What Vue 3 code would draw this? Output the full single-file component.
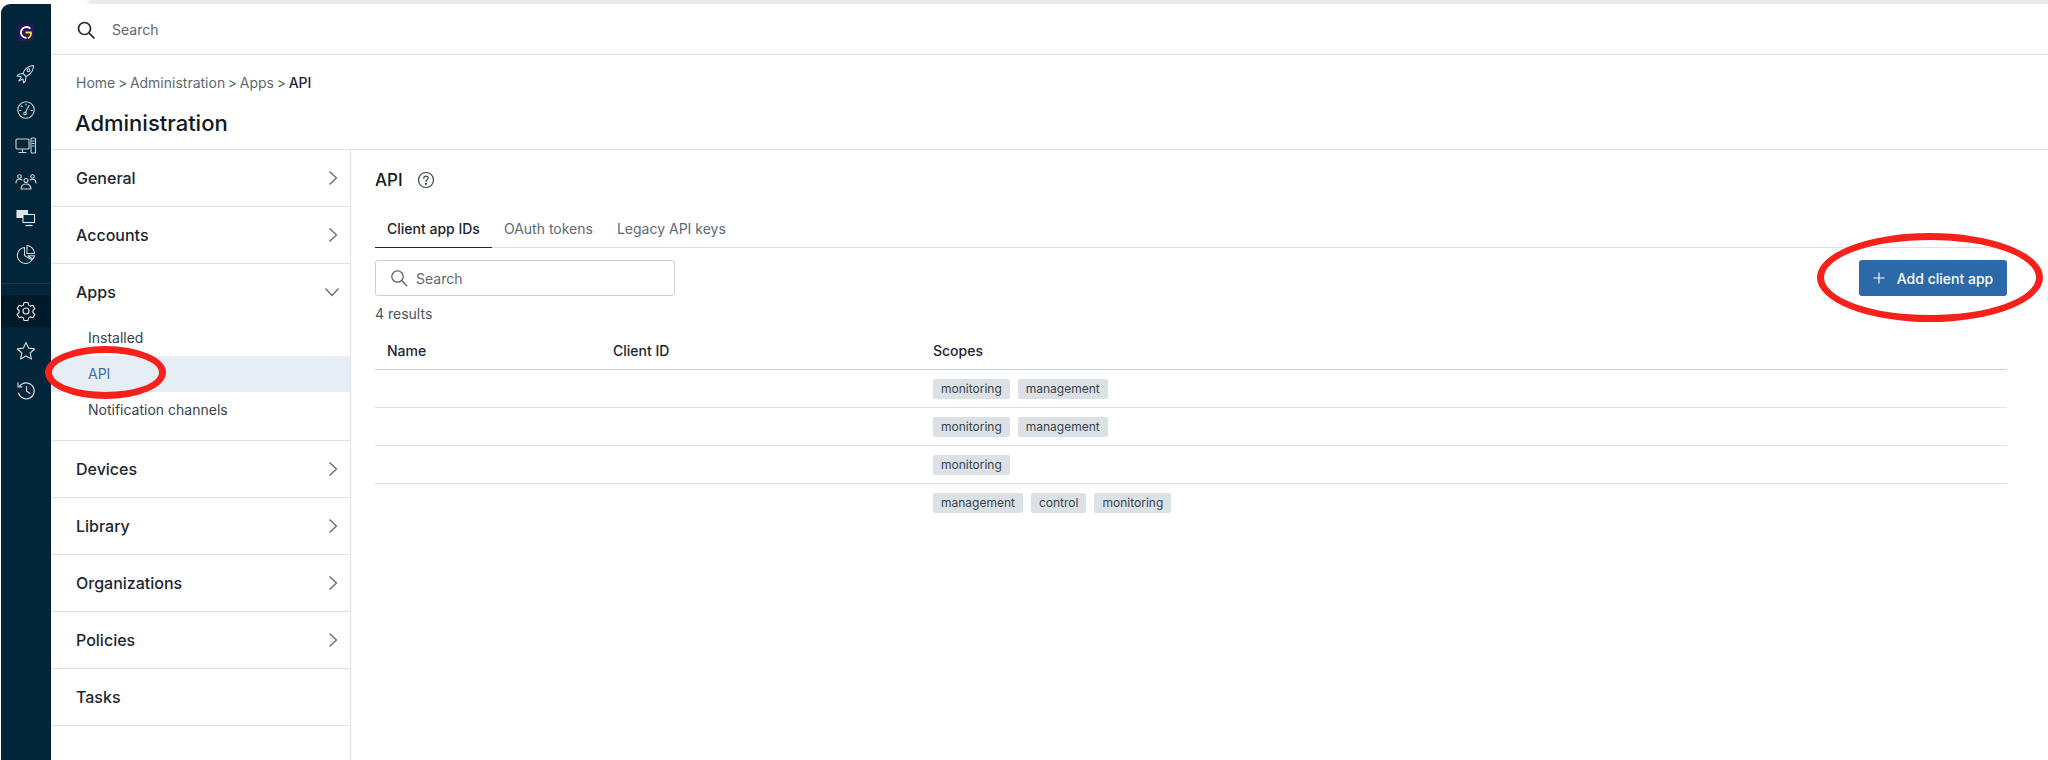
<script setup>
const sections = [
  { name: 'General', chevron: 'right' },
  { name: 'Accounts', chevron: 'right' },
  { name: 'Apps', chevron: 'down', children: ['Installed', 'API', 'Notification channels'] },
  { name: 'Devices', chevron: 'right' },
  { name: 'Library', chevron: 'right' },
  { name: 'Organizations', chevron: 'right' },
  { name: 'Policies', chevron: 'right' },
  { name: 'Tasks' }
]
const rows = [
  ['monitoring', 'management'],
  ['monitoring', 'management'],
  ['monitoring'],
  ['management', 'control', 'monitoring']
]
</script>

<template>
  <div class="page">
    <div class="strip"></div>
    <div class="shell">
      <aside class="rail">
        <div class="rail-logo">
          <svg width="16" height="17" viewBox="0 0 16 17" fill="none"><rect width="16" height="17" fill="#27175c"/><path d="M12.400 4.700A5.500 5.500 0 1 0 8.500 14" stroke="#fff" stroke-width="1.800"/><path d="M7.500 8.500h5.500c.4 2.500-1 4.600-3.200 5.800" stroke="#f3e03b" stroke-width="1.800"/></svg>
        </div>
        <div class="rail-icon r1">
          <svg width="22" height="22" viewBox="0 0 22 22" fill="none" stroke="#ccd5db" stroke-width="1.100" stroke-linejoin="round" stroke-linecap="round"><path d="M8 10.500c1.500-4.500 5-7.500 10.500-8 0 5.500-3 9-7.500 11z"/><circle cx="13.500" cy="7.200" r="1.400"/><path d="M8 10.500l-4.500.8L2 13l4 .6M11 13.500l-.6 4.500-1.700 1.800-.8-4"/><path d="M6 14.500l-2.200 3.500 3.500-1.800"/></svg>
        </div>
        <div class="rail-icon r2">
          <svg width="22" height="22" viewBox="0 0 22 22" fill="none" stroke="#ccd5db" stroke-width="1.100" stroke-linecap="round"><circle cx="11" cy="11" r="8.200"/><circle cx="10" cy="14.500" r="1.300"/><path d="M10.500 13.300L14 6.500M11 5v1M6.500 7l.7.7M4.800 11.500h1M16.200 11.500h1"/></svg>
        </div>
        <div class="rail-icon r3">
          <svg width="22" height="22" viewBox="0 0 22 22" fill="none" stroke="#ccd5db" stroke-width="1.100" stroke-linejoin="round"><rect x="1" y="4" width="13" height="10" rx="1"/><path d="M7.500 14v3M3.500 17.500h8"/><rect x="16" y="3" width="4.500" height="15" rx="1"/><path d="M17 6h2.500M17 8.500h2.500M17 11h2.500"/></svg>
        </div>
        <div class="rail-icon r4">
          <svg width="22" height="22" viewBox="0 0 22 22" fill="none" stroke="#ccd5db" stroke-width="1.100" stroke-linecap="round"><circle cx="11" cy="9.500" r="2"/><path d="M6 18c0-3 2-5 5-5s5 2 5 5z"/><circle cx="4.500" cy="5.500" r="1.800"/><circle cx="17.500" cy="5.500" r="1.800"/><path d="M1 12c0-2.500 1.300-3.800 3.500-3.800 1 0 1.800.3 2.400.8M21 12c0-2.500-1.300-3.800-3.500-3.800-1 0-1.800.3-2.400.8"/></svg>
        </div>
        <div class="rail-icon r5">
          <svg width="22" height="22" viewBox="0 0 22 22" fill="none" stroke="#dfe5e9" stroke-width="1.100"><path d="M2 3.500h10.500V7H7.500v3.500H2z" fill="#dfe5e9"/><rect x="8" y="7.500" width="11.500" height="8"/><path d="M10.500 18.500h7" stroke-width="1.300"/></svg>
        </div>
        <div class="rail-icon r6">
          <svg width="22" height="22" viewBox="0 0 22 22" fill="none" stroke="#ccd5db" stroke-width="1.100" stroke-linejoin="round"><path d="M9.500 4.500a8 8 0 1 0 7.500 12.500l-7.500-4.500z"/><path d="M12 2.500a8 8 0 0 1 7.500 8H12z"/><path d="M13 12.800h6.800l-2 3.500z"/></svg>
        </div>
        <div class="rail-sep"></div>
        <div class="rail-active">
          <svg width="22" height="22" viewBox="0 0 22 22" fill="none" stroke="#dfe5e9" stroke-width="1.100" stroke-linejoin="round"><path d="M9 2.500h4l.6 2.600 1.700 1 2.600-.8 2 3.400-2 1.800v2l2 1.800-2 3.400-2.600-.8-1.700 1-.6 2.600H9l-.6-2.600-1.700-1-2.600.8-2-3.400 2-1.800v-2l-2-1.800 2-3.400 2.600.8 1.700-1z"/><circle cx="11" cy="11" r="3"/></svg>
        </div>
        <div class="rail-icon r7">
          <svg width="22" height="22" viewBox="0 0 22 22" fill="none" stroke="#ccd5db" stroke-width="1.200" stroke-linejoin="round"><path d="M11 2.500l2.600 5.600 6.100.7-4.500 4.200 1.200 6-5.400-3-5.400 3 1.200-6-4.500-4.200 6.100-.7z"/></svg>
        </div>
        <div class="rail-icon r8">
          <svg width="22" height="22" viewBox="0 0 22 22" fill="none" stroke="#ccd5db" stroke-width="1.200" stroke-linecap="round" stroke-linejoin="round"><path d="M4.800 6A8 8 0 1 1 3.500 13"/><path d="M3 2.800v4h4M11.500 6.500V11l3.500 2.500"/></svg>
        </div>
      </aside>

      <div class="content">
        <header class="searchbar">
          <svg width="20" height="20" viewBox="0 0 20 20" fill="none" stroke="#1e2730" stroke-width="1.700" stroke-linecap="round"><circle cx="8.500" cy="8.500" r="6"/><path d="M13 13l5 5"/></svg>
          <span class="searchbar-text">Search</span>
        </header>

        <section class="titlebar">
          <nav class="crumbs">
            <span>Home</span><span class="gt">&gt;</span><span>Administration</span><span class="gt">&gt;</span><span>Apps</span><span class="gt">&gt;</span><b>API</b>
          </nav>
          <h1>Administration</h1>
        </section>

        <div class="workspace">
          <nav class="sections">
            <div v-for="s in sections" :key="s.name" class="section">
              <div class="section-head">
                <span>{{ s.name }}</span>
                <svg v-if="s.chevron === 'right'" width="10" height="16" viewBox="0 0 10 16" fill="none" stroke="#5f6972" stroke-width="1.300"><path d="M1.500 1.500L8.500 8l-7 6.500"/></svg>
                <svg v-if="s.chevron === 'down'" class="chev-down" width="16" height="10" viewBox="0 0 16 10" fill="none" stroke="#5f6972" stroke-width="1.300"><path d="M1.500 1.500L8 8.500l6.500-7"/></svg>
              </div>
              <ul v-if="s.children" class="sublist">
                <li v-for="c in s.children" :key="c" :class="{ current: c === 'API' }">{{ c }}</li>
              </ul>
            </div>
          </nav>

          <main class="detail">
            <div class="detail-title">
              <h2>API</h2>
              <svg width="18" height="18" viewBox="0 0 18 18" fill="none" stroke="#39434c" stroke-width="1.200"><circle cx="9" cy="9" r="7.500"/><path d="M6.800 7.200c0-1.300 1-2.100 2.200-2.100s2.200.8 2.200 2c0 1.700-2.200 1.700-2.200 3.400" stroke-linecap="round"/><circle cx="9" cy="12.800" r=".5" fill="#39434c"/></svg>
            </div>

            <div class="tabs">
              <span class="tab active">Client app IDs</span>
              <span class="tab">OAuth tokens</span>
              <span class="tab">Legacy API keys</span>
            </div>

            <div class="toolbar">
              <div class="filter">
                <svg width="18" height="18" viewBox="0 0 18 18" fill="none" stroke="#5a646d" stroke-width="1.300" stroke-linecap="round"><circle cx="7.500" cy="7.500" r="5.700"/><path d="M11.800 11.800l5 5"/></svg>
                <span>Search</span>
              </div>
              <button class="add">
                <svg width="12" height="12" viewBox="0 0 12 12" stroke="#fff" stroke-width="1.100"><path d="M6 .5v11M.5 6h11"/></svg>
                <span>Add client app</span>
              </button>
            </div>

            <div class="count">4 results</div>

            <div class="table">
              <div class="tr th">
                <span>Name</span><span>Client ID</span><span>Scopes</span>
              </div>
              <div v-for="(r, i) in rows" :key="i" class="tr">
                <span></span><span></span>
                <span class="tags"><em v-for="t in r" :key="t">{{ t }}</em></span>
              </div>
            </div>
          </main>
        </div>
      </div>
    </div>

    <div class="ring ring-api"></div>
    <div class="ring ring-add"></div>
  </div>
</template>

<style>
html, body { margin: 0; background: #fff; }
</style>

<style scoped>
.page {
  position: relative;
  width: 2048px;
  height: 760px;
  overflow: hidden;
  background: #fff;
  font-family: Inter, "Liberation Sans", sans-serif;
  color: #1c2630;
  display: flex;
  flex-direction: column;
}
.strip {
  height: 4px;
  flex: none;
  background: linear-gradient(to right, #fff 85px, #e9e9e9 92px);
}
.shell { flex: 1; display: flex; min-height: 0; }
.rail {
  width: 50px;
  margin-left: 1px;
  flex: none;
  background: #022539;
  border-top-left-radius: 9px;
  display: flex;
  flex-direction: column;
  align-items: center;
  box-sizing: border-box;
}
.rail-logo { margin-top: 20px; height: 17px; line-height: 0; }
.rail-icon { height: 22px; line-height: 0; }
.r1 { margin-top: 22px; }
.r2 { margin-top: 14px; }
.r3 { margin-top: 14px; }
.r4 { margin-top: 14px; }
.r5 { margin-top: 14px; }
.r6 { margin-top: 14px; }
.rail-sep { width: 100%; height: 1px; background: #143a4e; margin-top: 18px; }
.rail-active {
  width: 100%;
  height: 32px;
  margin-top: 11px;
  background: #011a29;
  display: flex;
  align-items: center;
  justify-content: center;
}
.r7 { margin-top: 13px; }
.r8 { margin-top: 18px; }

.content { flex: 1; min-width: 0; display: flex; flex-direction: column; }
.searchbar {
  height: 50px;
  flex: none;
  box-sizing: border-box;
  border-bottom: 1px solid #dde2e6;
  padding: 0 0 0 25px;
  display: flex;
  align-items: center;
  gap: 16px;
  margin-top: 1px;
}
.searchbar-text { font-size: 14px; color: #5e6870; }
.titlebar {
  height: 95px;
  flex: none;
  box-sizing: border-box;
  border-bottom: 1px solid #dde2e6;
  padding: 19px 0 0 25px;
}
.crumbs { font-size: 14px; line-height: 18px; color: #5e6870; display: flex; gap: 2.700px; }
.crumbs b { font-weight: 500; color: #1c2630; }
h1 { margin: 17px 0 0 -1px; font-size: 22px; line-height: 28px; font-weight: 500; color: #10191f; }

.workspace { flex: 1; display: flex; min-height: 0; }
.sections {
  width: 300px;
  flex: none;
  box-sizing: border-box;
  border-right: 1px solid #dde2e6;
}
.section { border-bottom: 1px solid #dde2e6; }
.section-head {
  height: 56px;
  box-sizing: border-box;
  padding: 0 12px 0 25px;
  display: flex;
  align-items: center;
  justify-content: space-between;
  font-size: 16px;
  font-weight: 500;
}
.chev-down { margin-right: -2px; }
.sublist { list-style: none; margin: 0; padding: 0 0 12px; }
.sublist li {
  height: 36px;
  line-height: 36px;
  padding-left: 37px;
  font-size: 14px;
  color: #39434c;
}
.sublist li.current { background: #e5edf5; color: #3d6fa8; }

.detail { flex: 1; min-width: 0; padding: 0 41px 0 24px; }
.detail-title { display: flex; align-items: center; gap: 14px; height: 60px; }
h2 { margin: 0; font-size: 17px; font-weight: 500; color: #10191f; }
.tabs { display: flex; height: 38px; border-bottom: 1px solid #dde2e6; box-sizing: border-box; }
.tab {
  padding: 0 12px;
  line-height: 38px;
  font-size: 14px;
  color: #5e6870;
  height: 38px;
  box-sizing: border-box;
}
.tab.active { color: #1c2630; font-weight: 500; border-bottom: 1px solid #1c2630; }
.toolbar { display: flex; justify-content: space-between; margin-top: 12px; }
.filter {
  width: 300px;
  height: 36px;
  box-sizing: border-box;
  border: 1px solid #c9d0d6;
  border-radius: 3px;
  display: flex;
  align-items: center;
  gap: 8px;
  padding-left: 14px;
  font-size: 14px;
  color: #5e6870;
}
.add {
  width: 148px;
  height: 36px;
  border: 0;
  border-radius: 3px;
  background: #2c69a8;
  color: #fff;
  font: 500 14px Inter, "Liberation Sans", sans-serif;
  display: flex;
  align-items: center;
  justify-content: center;
  gap: 12px;
  padding: 0;
}
.count { margin-top: 9px; font-size: 14px; line-height: 18px; color: #4a545c; }
.table { margin-top: 9px; }
.tr {
  display: grid;
  grid-template-columns: 226px 320px 1fr;
  height: 38px;
  box-sizing: border-box;
  border-bottom: 1px solid #dde2e6;
  padding-left: 12px;
  align-items: center;
}
.th { font-size: 14px; font-weight: 500; border-bottom-color: #c9d0d9; }
.tags { display: flex; gap: 8px; }
.tags em {
  font-style: normal;
  font-size: 12px;
  line-height: 20px;
  height: 20px;
  padding: 0 8px;
  background: #dce1e6;
  border-radius: 2px;
  color: #39434c;
}
.tr:last-child { border-bottom: 0; }

.ring {
  position: absolute;
  box-sizing: border-box;
  border: 7px solid #f5211a;
  border-radius: 50%;
}
.ring-api { left: 45px; top: 346px; width: 121px; height: 53px; }
.ring-add { left: 1817px; top: 233px; width: 226px; height: 89px; }
</style>
